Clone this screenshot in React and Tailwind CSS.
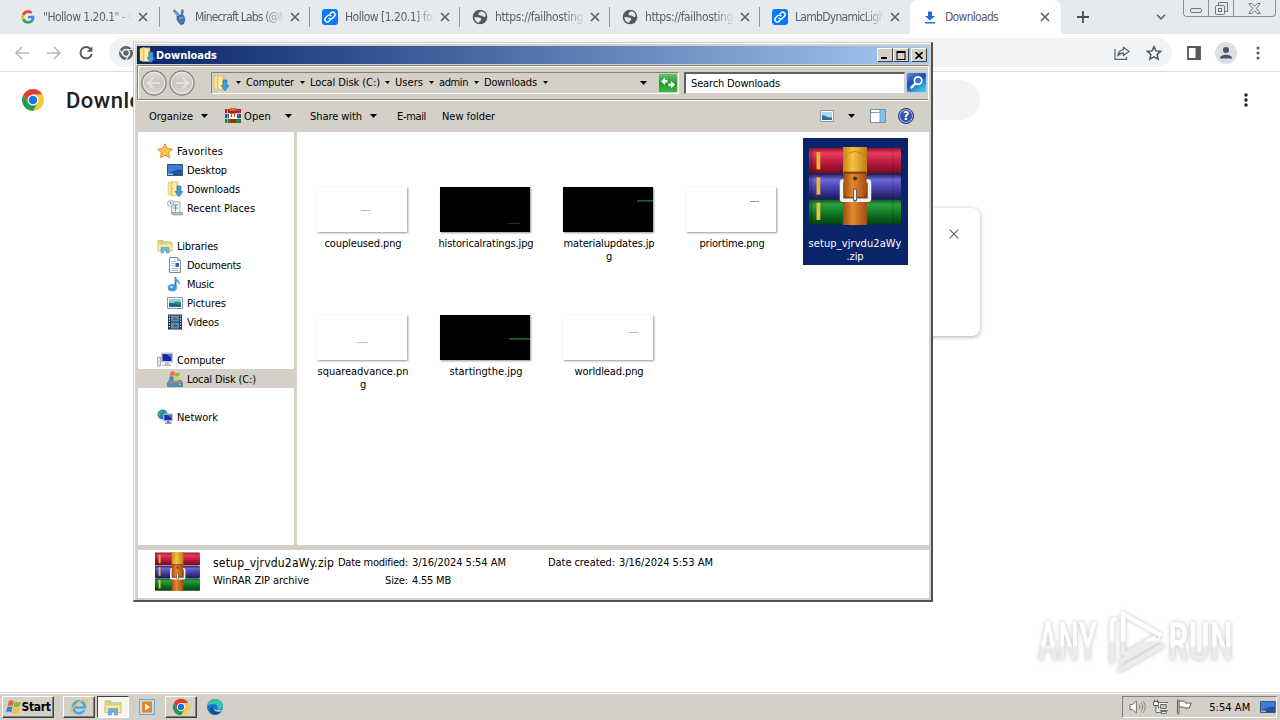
import React, { useLayoutEffect, useRef } from "react";

function Fit({ w, children, className = "pt-[2px]" }) {
  const ref = useRef(null);
  useLayoutEffect(() => {
    const el = ref.current;
    el.style.letterSpacing = "0px";
    const natural = el.getBoundingClientRect().width;
    el.style.letterSpacing = `${(w - natural) / String(children).length}px`;
  }, [w, children]);
  return (
    <span ref={ref} className={`inline-block whitespace-pre ${className}`}>
      {children}
    </span>
  );
}

function WinRar({ className }) {
  return (
    <svg viewBox="0 0 92 77" preserveAspectRatio="none" className={className}>
      <defs>
        <linearGradient id="rr" x1="0" y1="0" x2="0" y2="1">
          <stop offset="0" stopColor="#8f1030" />
          <stop offset=".2" stopColor="#e43c60" />
          <stop offset=".5" stopColor="#c41e42" />
          <stop offset="1" stopColor="#6e0a20" />
        </linearGradient>
        <linearGradient id="rb" x1="0" y1="0" x2="0" y2="1">
          <stop offset="0" stopColor="#2c2a78" />
          <stop offset=".2" stopColor="#6c68d8" />
          <stop offset=".5" stopColor="#4a44b4" />
          <stop offset="1" stopColor="#1e1a5c" />
        </linearGradient>
        <linearGradient id="rg" x1="0" y1="0" x2="0" y2="1">
          <stop offset="0" stopColor="#0a5c20" />
          <stop offset=".2" stopColor="#2ca040" />
          <stop offset=".5" stopColor="#118028" />
          <stop offset="1" stopColor="#044010" />
        </linearGradient>
        <linearGradient id="ry" x1="0" y1="0" x2="1" y2="0">
          <stop offset="0" stopColor="#c88414" />
          <stop offset=".4" stopColor="#f4c440" />
          <stop offset="1" stopColor="#c07c14" />
        </linearGradient>
        <linearGradient id="ro" x1="0" y1="0" x2="1" y2="0">
          <stop offset="0" stopColor="#a44c0c" />
          <stop offset=".4" stopColor="#e48830" />
          <stop offset="1" stopColor="#a04c10" />
        </linearGradient>
      </defs>
      <rect x="0" y="1" width="92" height="25.5" rx="2" fill="url(#rr)" />
      <rect x="0" y="27.5" width="92" height="24" rx="2" fill="url(#rb)" />
      <rect x="0" y="52" width="92" height="24.5" rx="2" fill="url(#rg)" />
      <path d="M84 2v24M84 28v23M84 53v23" stroke="#000" strokeOpacity=".18" />
      <path d="M2 2v24M2 28v23M2 53v23" stroke="#000" strokeOpacity=".22" strokeWidth="3" />
      <rect x="7.500" y="5" width="3.800" height="17" fill="#f2b52a" />
      <rect x="7.500" y="30" width="3.800" height="17" fill="#f2b52a" />
      <rect x="7.500" y="55" width="3.800" height="17" fill="#e8c63a" />
      <rect x="34" y="0" width="24" height="27" fill="url(#ry)" />
      <path d="M35 15c1-14 21-14 22 0" fill="none" stroke="#c48a1c" />
      <rect x="34" y="53" width="24" height="24" fill="url(#ro)" />
      <rect x="32.500" y="33.500" width="28" height="19" rx="1.500" fill="#8a4410" stroke="#f2f2f4" strokeWidth="3.500" />
      <path d="M34.500 24h23v21.500l-3 3.500h-17l-3-3.500z" fill="url(#ro)" />
      <path d="M34.500 25.500h23" stroke="#7a3806" strokeWidth="1.500" />
      <circle cx="46" cy="31" r="2" fill="#5a2806" />
      <path d="M46 43v9" stroke="#555" strokeWidth="4" strokeLinecap="round" />
      <path d="M46 43v8.500" stroke="#f0f0f0" strokeWidth="2.200" strokeLinecap="round" />
    </svg>
  );
}

function WinRarSmall({ className }) {
  return (
    <svg viewBox="0 0 16 16" className={className} shapeRendering="crispEdges">
      <path fill="#b8202c" d="M0 1h16v4H0z" />
      <path fill="#3444a8" d="M0 6h16v4H0z" />
      <path fill="#1c8434" d="M0 11h16v4H0z" />
      <path fill="#d4a428" d="M2 1h1v4H2zM2 6h1v4H2zM2 11h1v4H2z" />
      <path fill="#d86c20" d="M5 0h6v15H5z" />
      <path fill="#a02810" d="M5 3h6v2H5zM5 11h6v4H5z" />
      <path fill="#fff" d="M4 6h8v5H4z" />
      <path fill="#a4561c" d="M6 6h1v3H6zM9 6h1v3H9z" />
      <path fill="#88a8e8" d="M13 2h1v1h-1zM13 7h1v1h-1z" />
      <path fill="#60c060" d="M13 12h1v1h-1z" />
    </svg>
  );
}

function DownloadFolder({ className }) {
  return (
    <svg viewBox="0 0 16 16" className={className}>
      <path d="M1 1.500 5 .5v14l-4-1z" fill="#f8e48c" stroke="#e0bc58" strokeWidth=".5" />
      <path d="M4.500.8h6.500v13.700H4.500z" fill="#f2d46c" stroke="#d8b04c" strokeWidth=".5" />
      <path d="M5.500 1.500h3.500v12.500H5.500z" fill="#fbeeb0" />
      <path d="M10 5h4v5.500h2L12 15.800 8 10.500h2z" fill="#3a9ce0" stroke="#1c74bc" strokeWidth=".6" />
    </svg>
  );
}

function LibFolder({ className }) {
  return (
    <svg viewBox="0 0 16 16" className={className}>
      <path d="M1 2.500h5l1 1.500h8v9H1z" fill="#f4d873" stroke="#d0a440" strokeWidth=".6" />
      <path d="M3 3.500h9v3H3z" fill="#b4dca0" />
      <path d="M1 6h14v7H1z" fill="#f9e8a4" stroke="#d8b458" strokeWidth=".5" />
      <path d="M4 15V9.500h8V15h-2.500v-3h-3v3z" fill="#68b4e4" stroke="#3a88c0" strokeWidth=".5" />
    </svg>
  );
}

function Screen({ className }) {
  return (
    <svg viewBox="0 0 16 16" className={className}>
      <path d="M.5 2.500h15v11H.5z" fill="#24509c" stroke="#34507c" />
      <path d="M1 3h14v5C10 7 5 9 1 12z" fill="#3f7cd8" />
      <path d="M1 11.500h5v1.500H1z" fill="#8cc4f0" />
    </svg>
  );
}

const navIcons = {
  star: (
    <path d="m8 .8 2.200 4.700 5.200.6-3.800 3.500 1 5.200L8 12.200l-4.600 2.600 1-5.200L.6 6.100l5.200-.6z" fill="#ffc44c" stroke="#dc8420" strokeWidth=".9" />
  ),
  recent: (
    <>
      <path d="M4 2h9v10l2 2H5z" fill="#eef3f5" stroke="#8a98a4" strokeWidth=".8" />
      <path d="M6 5h5M6 8h5M8.500 5v6" stroke="#5c9ac0" />
      <path d="M4 12.500h11.500V15H6z" fill="#b4bec4" stroke="#808c94" strokeWidth=".6" />
      <circle cx="3.500" cy="3.500" r="3" fill="#eef6fb" stroke="#8c9cac" strokeWidth=".8" />
      <path d="M3.500 1.800v2h1.500" fill="none" stroke="#567" strokeWidth=".7" />
    </>
  ),
  doc: (
    <>
      <path d="M2.500.5h8l3 3v12h-11z" fill="#fff" stroke="#808a94" />
      <path d="M10.500.5v3h3" fill="#d4dce2" stroke="#808a94" strokeWidth=".8" />
      <path d="M4.500 4.500h5M4.500 6.500h3M4.500 8.500h3M4.500 11.500h7M4.500 13.500h7" stroke="#8cacc8" strokeWidth=".8" />
      <path d="M8.500 6h3.500v4H8.500z" fill="#2c64ac" />
    </>
  ),
  music: (
    <>
      <path d="M8.500 1v10.500" stroke="#2c78c8" strokeWidth="1.800" />
      <path d="M8 .5c.5 3.500 6.500 3.500 4.500 8.500C12 6 9.500 6 8 5z" fill="#48a4e4" />
      <ellipse cx="5.300" cy="11.800" rx="4.200" ry="3.300" fill="#3c9ce4" stroke="#2474b8" strokeWidth=".5" />
      <ellipse cx="4.400" cy="10.900" rx="1.800" ry="1" fill="#b0dcf8" />
    </>
  ),
  picture: (
    <>
      <path d="M.5 2.500h15v11H.5z" fill="#fff" stroke="#8498a8" />
      <path d="M2 4h12v8H2z" fill="#8ccce8" />
      <path d="M2 8c4-1 6 2 12 0v4H2z" fill="#236488" />
      <path d="M6 8c2-2 5-1.500 8-.5v2c-3 0-5 0-8-1.500z" fill="#2c8c70" />
    </>
  ),
  video: (
    <>
      <path d="M1 .5h14v15H1z" fill="#243040" />
      <path d="M4 1.500h8v6H4zM4 8.500h8v6H4z" fill="#4c94cc" />
      <path d="M6 5l2-2 2.500 2v1H6zM6 12l2-2 2.500 2v1H6z" fill="#884c44" />
      <path d="M2.500 1.500v13M13.500 1.500v13" stroke="#e8eef4" strokeWidth="1.200" strokeDasharray="1.300 1.300" />
    </>
  ),
  computer: (
    <>
      <path d="M.5 5h3v9h-3z" fill="#dce0e4" stroke="#8c949c" strokeWidth=".7" />
      <path d="M4.500 1h11v9h-11z" fill="#d8dce4" stroke="#a0a8b4" strokeWidth=".7" />
      <path d="M5.500 2h9v7h-9z" fill="#1424a8" />
      <path d="M9 2h5.500v4z" fill="#4870e4" />
      <path d="M8 10.500h4v2H8zM5 12.500h9V14H5z" fill="#b4bcc8" />
    </>
  ),
  disk: (
    <>
      <path d="M2 9.500h12l2 2.500v3.500H.5V12z" fill="#7c94a4" stroke="#4c6474" strokeWidth=".6" />
      <path d="M1 12.500h14.500v2.500H1z" fill="#3c98b4" />
      <path d="M12 13h2v1h-2z" fill="#6cf080" />
      <path d="M3.500 1c2-1 3.500 0 4.500.3L7.200 5c-1.500-.8-3-.6-4.400.2z" fill="#f06c30" />
      <path d="M8.500 1.500c1.500.7 3 .6 4.200 0L12 5.200c-1.500.7-3 .5-4.200 0z" fill="#8cc044" />
      <path d="M2.600 5.800c1.500-.7 3-.6 4.400 0l-.8 3.700C5 9 3.400 9 2 9.600z" fill="#3c8ce0" />
      <path d="M7.600 6c1.400.6 2.800.6 4.200 0L11 9.700c-1.400.5-2.800.5-4.200 0z" fill="#f8c43c" />
    </>
  ),
  network: (
    <>
      <circle cx="5.500" cy="5.500" r="5" fill="#2480c8" />
      <path d="M2 3c1-2 3-2 3-.5S3 4 3.500 6 2.500 8 2 7.500.5 5 2 3zM8 1c2 1 2.500 3 2.500 4C8 5 7 3.500 8 1z" fill="#44b454" />
      <path d="M6.500 5h9v7h-9z" fill="#d8dce4" stroke="#9ca4b0" strokeWidth=".6" />
      <path d="M7.300 5.800h7.400v5.400H7.300z" fill="#1a2cb4" />
      <path d="M10 5.800h4.700V9z" fill="#4c74e8" />
      <path d="M10 12h2.500v1.500H10zM8 13.500h6.500v1.200H8z" fill="#6c7c94" />
    </>
  ),
};

function NavIcon({ name }) {
  if (name === "desktop") return <Screen className="h-4 w-4 shrink-0" />;
  if (name === "download") return <DownloadFolder className="h-4 w-4 shrink-0" />;
  if (name === "library") return <LibFolder className="h-4 w-4 shrink-0" />;
  return (
    <svg viewBox="0 0 16 16" className="h-4 w-4 shrink-0">
      {navIcons[name]}
    </svg>
  );
}

function Chrome({ className }) {
  return (
    <svg viewBox="0 0 48 48" className={className}>
      <path d="M24 13h19.050A22 22 0 0 1 24 46l9.500-16.500z" fill="#fcc934" />
      <path d="M14.500 29.500 4.950 13A22 22 0 0 0 24 46l9.500-16.500z" fill="#1e9e4a" />
      <path d="M24 13H43.050A22 22 0 0 0 4.950 13l9.550 16.500z" fill="#e33b2e" />
      <circle cx="24" cy="24" r="11" fill="#fff" />
      <circle cx="24" cy="24" r="8.500" fill="#1a73e8" />
    </svg>
  );
}

function XMark({ className = "" }) {
  return (
    <svg viewBox="0 0 10 10" className={`h-[10px] w-[10px] shrink-0 ${className}`}>
      <path d="m1 1 8 8M9 1 1 9" stroke="currentColor" strokeWidth="1.700" />
    </svg>
  );
}

const favicons = {
  google: (
    <svg viewBox="0 0 48 48" className="h-[14px] w-[14px]">
      <path fill="#4285f4" d="M46 24.500c0-1.600-.1-3.100-.4-4.500H24v8.500h12.400c-.5 2.900-2.200 5.300-4.600 6.900v5.800h7.500C43.600 37.200 46 31.400 46 24.500z" />
      <path fill="#34a853" d="M24 47c6.200 0 11.400-2.100 15.300-5.600l-7.500-5.800c-2.100 1.400-4.700 2.200-7.800 2.200-6 0-11-4-12.800-9.500H3.500v6C7.300 41.900 15 47 24 47z" />
      <path fill="#fbbc04" d="M11.200 28.300a13.800 13.800 0 0 1 0-8.700v-6H3.500a23 23 0 0 0 0 20.700z" />
      <path fill="#ea4335" d="M24 10.100c3.400 0 6.400 1.200 8.800 3.400l6.600-6.600C35.400 3.300 30.200 1 24 1 15 1 7.300 6.100 3.500 13.600l7.700 6C13 14.100 18 10.100 24 10.100z" />
    </svg>
  ),
  hand: (
    <svg viewBox="0 0 16 16" className="h-4 w-4">
      <path d="M2.500 2 8 8M10.500 1.500 9.500 8" stroke="#4a80b8" strokeWidth="2.600" strokeLinecap="round" />
      <path d="M5 7 11.500 6.500l1.500 4-1.500 4.500-3 .5L5 11z" fill="#4478b0" stroke="#2c5480" strokeWidth=".7" />
      <path d="m2.800 2.800 4 4.200M7 9.500l4-1" stroke="#a0c8ec" strokeWidth=".9" />
    </svg>
  ),
  link: (
    <svg viewBox="0 0 16 16" className="h-4 w-4">
      <rect width="16" height="16" rx="3" fill="#0a78ff" />
      <g fill="none" stroke="#fff" strokeWidth="1.400" strokeLinecap="round">
        <path d="M7 9.300a2.400 2.400 0 0 0 3.400 0l2-2A2.400 2.400 0 0 0 9 3.900l-1.100 1" />
        <path d="M9 6.800a2.400 2.400 0 0 0-3.400 0l-2 2A2.400 2.400 0 0 0 7 12.200l1.100-1" />
      </g>
    </svg>
  ),
  globe: (
    <svg viewBox="0 0 16 16" className="h-4 w-4">
      <circle cx="8" cy="8" r="7.300" fill="#55595e" />
      <path d="M9 2.200C8 3.500 6.500 3.500 6.500 5s1.500 1.500 3 1.500S11 8 12 8s1.500-.5 1.700-1.500C13.200 4 11.500 2.500 9 2.200zM2.500 8c1.500 0 3 .5 4.500.5S9.500 9.500 9 11s-2 1-2 2.700C4.500 13.500 2.500 11 2.500 8z" fill="#e8eaed" />
    </svg>
  ),
  download: (
    <svg viewBox="0 0 16 16" className="h-4 w-4">
      <path d="M6 2.500h4V7h3l-5 4.500L3 7h3zM3 13h10v1.600H3z" fill="#1a6ae0" />
    </svg>
  ),
};

const tabs = [
  { icon: "google", text: "\"Hollow 1.20.1\" - G", w: 93, cls: "w-[152px] pl-[12px]" },
  { icon: "hand", text: "Minecraft Labs (@M", w: 92, cls: "w-[150px] pl-3" },
  { icon: "link", text: "Hollow [1.20.1] for", w: 91, cls: "w-[150px] pl-3" },
  { icon: "globe", text: "https://failhosting.", w: 91, cls: "w-[150px] pl-3" },
  { icon: "globe", text: "https://failhosting.", w: 91, cls: "w-[150px] pl-3" },
  { icon: "link", text: "LambDynamicLights", w: 98, cls: "w-[150px] pl-3", last: true },
];

function TabBody({ icon, text, w }) {
  return (
    <>
      <span className="flex w-4 shrink-0 justify-center">{favicons[icon]}</span>
      <span className="ml-[7px] w-[90px] overflow-hidden text-[12px] leading-4 text-[#5c6064] [mask-image:linear-gradient(to_right,#000_76%,transparent)]">
        <Fit w={w} className="">{text}</Fit>
      </span>
      <XMark className="ml-[5px] text-[#5f6368]" />
    </>
  );
}

function Browser() {
  return (
    <div className="flex h-[692px] flex-col overflow-hidden bg-white">
      <div className="flex h-[34px] shrink-0 bg-[#e7eaed] pl-[8px]">
        {tabs.map((t, i) => (
          <div key={i} className={`flex h-[34px] shrink-0 items-center ${t.cls}`}>
            <TabBody {...t} />
            {!t.last && <span className="ml-auto h-5 w-px bg-[#909498]" />}
          </div>
        ))}
        <div className="flex h-[34px] w-[151px] shrink-0 items-center rounded-t-lg bg-white pl-3">
          <span className="w-4 shrink-0">{favicons.download}</span>
          <span className="ml-[7px] w-[90px] text-[12px] leading-4 text-[#5c6064]">
            <Fit w={53} className="">Downloads</Fit>
          </span>
          <XMark className="ml-[5px] text-[#5f6368]" />
        </div>
        <svg viewBox="0 0 12 12" className="mt-[11px] ml-[16px] h-3 w-3 shrink-0">
          <path d="M6 0v12M0 6h12" stroke="#4a4e52" strokeWidth="1.800" />
        </svg>
        <svg viewBox="0 0 10 6" className="mt-[14px] ml-[67px] h-[6px] w-[10px] shrink-0">
          <path d="m1 .8 4 4 4-4" fill="none" stroke="#5f6368" strokeWidth="1.600" />
        </svg>
        <div className="ml-[17px] flex h-[17px] w-[93px] shrink-0 rounded-b border border-t-0 border-[#8b8f95] text-[#70757c]">
          <div className="flex w-[25px] items-center justify-center border-r border-[#8b8f95] pt-1">
            <svg viewBox="0 0 12 5" className="h-[5px] w-3">
              <rect x=".5" y=".5" width="11" height="4" rx="1.500" fill="none" stroke="currentColor" />
            </svg>
          </div>
          <div className="flex w-[25px] items-center justify-center border-r border-[#8b8f95]">
            <svg viewBox="0 0 13 13" className="h-[13px] w-[13px]" fill="none" stroke="currentColor">
              <path d="M3.500 3.500v-3h9v9h-3" />
              <rect x=".5" y="3.500" width="9" height="9" rx="1" />
              <rect x="3.500" y="6.500" width="3" height="3" />
            </svg>
          </div>
          <div className="flex flex-1 items-center justify-center">
            <svg viewBox="0 0 13 11" className="h-[11px] w-[13px]" fill="none" stroke="currentColor">
              <path d="M.8.5h3l2.700 2.800L9.200.5h3L8.500 5.500l3.700 5h-3L6.500 7.700l-2.700 2.800h-3l3.700-5z" />
            </svg>
          </div>
        </div>
      </div>

      <div className="flex h-[38px] shrink-0 items-center border-b border-[#d9dbde] bg-white pl-[14px]">
        {[0, 1].map((i) => (
          <svg key={i} viewBox="0 0 16 14" className={i ? "ml-4 h-[14px] w-4 rotate-180" : "h-[14px] w-4"}>
            <path d="M15 7h-13M8 1 2 7l6 6" fill="none" stroke="#b6b8ba" strokeWidth="1.600" />
          </svg>
        ))}
        <svg viewBox="0 0 16 16" className="ml-4 h-4 w-4">
          <path d="M12.500 4A5.700 5.700 0 1 0 13.700 9" fill="none" stroke="#54585c" strokeWidth="1.900" />
          <path d="M14.300 1.200v5.600H8.700z" fill="#54585c" />
        </svg>
        <div className="ml-[15px] flex h-[29px] w-[1063px] items-center rounded-full bg-[#f1f3f4] pr-[9px] pl-[9px]">
          <svg viewBox="0 0 16 16" className="h-4 w-4">
            <circle cx="8" cy="8" r="7" fill="#5f6368" />
            <circle cx="8" cy="8" r="3.500" fill="#5f6368" stroke="#f1f3f4" strokeWidth="1.500" />
            <path d="M8 4.500h6.500M5 9.800 1.500 4.500M11 9.800 8 15" stroke="#f1f3f4" strokeWidth="1.200" />
          </svg>
          <svg viewBox="0 0 16 14" className="ml-auto h-[14px] w-4" fill="none" stroke="#5f6368" strokeWidth="1.300">
            <path d="M1 3v10.300h11.500V11" />
            <path d="M9.500 1.200 15 5.500 9.500 9.500V7C6.500 7 5 8 3.800 10 4.200 6.500 6 4 9.500 3.600z" strokeLinejoin="round" />
          </svg>
          <svg viewBox="0 0 24 24" className="ml-[15px] h-[18px] w-[18px]" fill="none" stroke="#54585c" strokeWidth="2">
            <path d="m12 3.500 2.600 5.700 6.200.7-4.600 4.200 1.300 6.100-5.500-3.100-5.500 3.100 1.300-6.100-4.600-4.200 6.200-.7z" />
          </svg>
        </div>
        <svg viewBox="0 0 14 14" className="ml-[15px] h-[14px] w-[14px]">
          <path d="M1 1h12v12H1z" fill="none" stroke="#54585c" strokeWidth="1.800" />
          <path d="M8.500 1H13v12H8.500z" fill="#54585c" />
        </svg>
        <svg viewBox="0 0 22 22" className="ml-[14px] h-[22px] w-[22px]">
          <circle cx="11" cy="11" r="11" fill="#dcdfe6" />
          <circle cx="11" cy="8" r="3" fill="#485468" />
          <path d="M5 16.500c0-5 12-5 12 0z" fill="#485468" />
        </svg>
        <svg viewBox="0 0 4 14" className="ml-[19px] h-[14px] w-1" fill="#54585c">
          <circle cx="2" cy="2" r="1.500" /><circle cx="2" cy="7" r="1.500" /><circle cx="2" cy="12" r="1.500" />
        </svg>
      </div>

      <div className="flex h-14 shrink-0 items-center pl-[21px]">
        <Chrome className="h-6 w-6" />
        <span className="ml-[21px] font-[Roboto,sans-serif] text-[22px] font-medium tracking-[0.5px] text-[#202124] [font-stretch:normal]">Downloads</span>
        <div className="ml-auto h-10 w-[680px] rounded-full bg-[#f1f3f4]" />
        <svg viewBox="0 0 4 14" className="mr-[32px] ml-[264px] h-[14px] w-1" fill="#202124">
          <circle cx="2" cy="2" r="1.700" /><circle cx="2" cy="7" r="1.700" /><circle cx="2" cy="12" r="1.700" />
        </svg>
      </div>
      <div className="mx-auto mt-20 flex h-[128px] w-[680px] justify-end rounded-lg bg-white pt-[21px] pr-[21px] shadow-[0_1px_4px_rgba(60,64,67,0.45)]">
        <svg viewBox="0 0 10 10" className="h-[10px] w-[10px]">
          <path d="m.7.7 8.600 8.600M9.300.7.7 9.300" stroke="#5f6368" strokeWidth="1.200" />
        </svg>
      </div>
    </div>
  );
}

function Caret({ className = "", small = false }) {
  return (
    <svg viewBox="0 0 7 4" className={`shrink-0 ${small ? "h-[3px] w-[5px]" : "h-1 w-[7px]"} ${className}`}>
      <path d="M0 0h7L3.500 4z" fill="#000" />
    </svg>
  );
}

const crumbs = [
  { t: "Computer", w: 48, c: "w-[54px]" },
  { t: "Local Disk (C:)", w: 70, c: "w-[75px]" },
  { t: "Users", w: 28, c: "w-[34px]" },
  { t: "admin", w: 29, c: "w-[35px]" },
  { t: "Downloads", w: 53, c: "w-[59px]" },
];

const nav = [
  { t: "Favorites", w: 46, i: "star" },
  { t: "Desktop", w: 40, i: "desktop", sub: true },
  { t: "Downloads", w: 53, i: "download", sub: true },
  { t: "Recent Places", w: 68, i: "recent", sub: true },
  null,
  { t: "Libraries", w: 41, i: "library" },
  { t: "Documents", w: 54, i: "doc", sub: true },
  { t: "Music", w: 27, i: "music", sub: true },
  { t: "Pictures", w: 39, i: "picture", sub: true },
  { t: "Videos", w: 32, i: "video", sub: true },
  null,
  { t: "Computer", w: 48, i: "computer" },
  { t: "Local Disk (C:)", w: 69, i: "disk", sub: true, sel: true },
  null,
  { t: "Network", w: 41, i: "network" },
];

const files = [
  { lines: [["coupleused.png", 77]], mark: "mt-[23px] ml-[44px] w-[10px] bg-[#bcbcbc]" },
  { lines: [["historicalratings.jpg", 95]], dark: true, mark: "mt-[36px] ml-[68px] w-[12px] bg-[#2c2c2c]" },
  { lines: [["materialupdates.jp", 91], ["g", 6]], dark: true, mark: "mt-[13px] ml-[74px] w-[16px] shadow-[0_1px_0_#123c30] bg-[#1c5848]" },
  { lines: [["priortime.png", 65]], mark: "mt-[14px] ml-[64px] w-[9px] bg-[#90969c]" },
  { zip: true, lines: [["setup_vjrvdu2aWy", 93], [".zip", 17]] },
  { lines: [["squareadvance.pn", 91], ["g", 6]], mark: "mt-[27px] ml-[40px] w-[11px] bg-[#a8d0cc]" },
  { lines: [["startingthe.jpg", 73]], dark: true, mark: "mt-[23px] ml-[69px] w-[21px] shadow-[0_1px_0_#14401c] bg-[#1f6634]" },
  { lines: [["worldlead.png", 69]], mark: "mt-[17px] ml-[66px] w-[9px] bg-[#b4b0cc]" },
];

function File({ f }) {
  return (
    <div className={`flex h-[127px] flex-col items-center ${f.zip ? "bg-[#0a246a] text-white" : ""}`}>
      {f.zip ? (
        <WinRar className="mt-[9px] ml-[6px] h-[78px] w-[92px] shrink-0 self-start" />
      ) : (
        <div className={`mt-[49px] ml-[6px] flex h-[45px] w-[90px] shrink-0 items-start self-start shadow-[1px_1px_2px_rgba(0,0,0,0.42)] ${f.dark ? "bg-black" : "bg-white"}`}>
          <span className={`block h-px ${f.mark}`} />
        </div>
      )}
      <div className={`mr-px flex flex-col items-center leading-[13px] ${f.zip ? "mt-[12px]" : "mt-[5px]"}`}>
        {f.lines.map(([t, w], i) => (
          <Fit key={i} w={w} className="">{t}</Fit>
        ))}
      </div>
    </div>
  );
}

function CaptionButton({ children, className = "" }) {
  return (
    <span className={`flex h-[14px] w-4 items-center justify-center border border-t-white border-r-[#404040] border-b-[#404040] border-l-white bg-[#d4d0c8] ${className}`}>
      {children}
    </span>
  );
}

function Explorer() {
  return (
    <div className="absolute top-[42px] left-[133px] flex h-[560px] w-[800px] flex-col border-t border-r-2 border-b-2 border-l border-t-[#d4d0c8] border-r-[#505050] border-b-[#505050] border-l-[#d4d0c8] bg-[#d4d0c8] text-[11px] text-black">
      <div className="flex min-h-0 flex-1 flex-col border-t border-l border-white pt-[2px] pr-[2px] pb-[2px] pl-[2px]">
        <div className="flex h-[18px] shrink-0 items-center bg-gradient-to-r from-[#0a246a] to-[#a6caf0] pr-[2px] pl-[2px]">
          <DownloadFolder className="h-4 w-4" />
          <span className="ml-[1px] font-bold text-white"><Fit w={61}>Downloads</Fit></span>
          <CaptionButton className="ml-auto">
            <svg viewBox="0 0 10 8" className="h-2 w-[10px]"><path d="M1 6h6v2H1z" /></svg>
          </CaptionButton>
          <CaptionButton>
            <svg viewBox="0 0 10 9" className="h-[9px] w-[10px]"><path d="M.5 0h9v9h-9zM1.500 2v6h7V2z" fillRule="evenodd" /></svg>
          </CaptionButton>
          <CaptionButton className="ml-[2px]">
            <svg viewBox="0 0 8 7" className="h-[7px] w-2"><path d="m.5 0 7 7M7.500 0l-7 7" stroke="#000" strokeWidth="1.600" /></svg>
          </CaptionButton>
        </div>

        <div className="mt-[1px] flex h-[35px] shrink-0 items-center border border-t-[#808080] border-r-white border-b-[#808080] border-l-[#808080] pl-[4px] shadow-[inset_1px_1px_0_#fff,0_1px_0_#fff]">
          {[0, 1].map((i) => (
            <svg key={i} viewBox="0 0 26 26" className={`h-[26px] w-[26px] shrink-0 ${i ? "ml-[2px]" : "-ml-px"}`}>
              <defs>
                <linearGradient id="navbtn" x1="0" y1="0" x2="0" y2="1">
                  <stop offset="0" stopColor="#e0deda" />
                  <stop offset=".5" stopColor="#c8c5c0" />
                  <stop offset="1" stopColor="#dcdad4" />
                </linearGradient>
              </defs>
              <circle cx="13" cy="13" r="12" fill="url(#navbtn)" stroke="#888682" strokeWidth="1.300" />
              <circle cx="13" cy="13" r="10.800" fill="none" stroke="#efeeec" />
              <path transform={i ? "rotate(180 13 13)" : ""} d="M19 13H7.500M12.500 7.500 7 13l5.500 5.500" fill="none" stroke="#e4e2de" strokeWidth="2" />
            </svg>
          ))}
          <div className="ml-[16px] flex h-[22px] w-[468px] items-center border border-t-[#808080] border-r-white border-b-white border-l-[#808080] pl-[1px]">
            <DownloadFolder className="h-4 w-4 shrink-0" />
            <Caret small className="ml-[7px]" />
            <div className="ml-[5px] flex items-center">
              {crumbs.map((c) => (
                <div key={c.t} className="flex items-center">
                  <span className={`shrink-0 ${c.c}`}><Fit w={c.w}>{c.t}</Fit></span>
                  <Caret small className="mr-[5px]" />
                </div>
              ))}
            </div>
            <Caret className="mr-[11px] ml-auto" />
            <svg viewBox="0 0 20 20" className="h-5 w-5 shrink-0">
              <defs>
                <linearGradient id="refresh" x1="0" y1="0" x2="0" y2="1">
                  <stop offset="0" stopColor="#70c470" />
                  <stop offset=".5" stopColor="#249834" />
                  <stop offset="1" stopColor="#3cbc44" />
                </linearGradient>
              </defs>
              <rect x=".5" y=".5" width="19" height="19" fill="url(#refresh)" stroke="#bcd8b4" />
              <path d="M3 8.500 7 4.500v2.500h2.500v2.500H7V12zM17 11.500 13 15.500V13h-2.500v-2.500H13V8z" fill="#fff" />
            </svg>
          </div>
          <div className="ml-[5px] flex h-[22px] w-[221px] shrink-0 items-center border-t-2 border-r border-b border-l-2 border-t-[#606060] border-r-[#d4d0c8] border-b-[#d4d0c8] border-l-[#606060] bg-white pl-[5px]">
            <Fit w={89}>Search Downloads</Fit>
          </div>
          <svg viewBox="0 0 20 20" className="ml-[1px] h-[21px] w-[21px] shrink-0">
            <defs>
              <linearGradient id="search" x1="0" y1="0" x2=".6" y2="1">
                <stop offset="0" stopColor="#6c90dc" />
                <stop offset=".5" stopColor="#1c48b4" />
                <stop offset="1" stopColor="#34c8e8" />
              </linearGradient>
            </defs>
            <rect x=".5" y=".5" width="19" height="19" rx="2" fill="url(#search)" stroke="#b8cce4" />
            <circle cx="11.500" cy="8.200" r="3.600" fill="#3c74d4" stroke="#fff" strokeWidth="1.600" />
            <path d="M8.800 11 4.500 15.300" stroke="#fff" strokeWidth="2.300" />
          </svg>
        </div>

        <div className="flex h-[32px] shrink-0 items-center pl-[12px]">
          <Fit w={44}>Organize</Fit>
          <Caret className="ml-[8px]" />
          <WinRarSmall className="ml-[17px] h-4 w-4" />
          <span className="ml-[3px] w-[41px]"><Fit w={27}>Open</Fit></span>
          <Caret />
          <span className="ml-[18px] w-[60px]"><Fit w={52}>Share with</Fit></span>
          <Caret />
          <span className="ml-[20px] w-[45px]"><Fit w={29}>E-mail</Fit></span>
          <Fit w={53}>New folder</Fit>
          <svg viewBox="0 0 14 12" className="ml-[325px] h-3 w-[14px]">
            <path d="M.5.5h13v11H.5z" fill="#fff" stroke="#8c98a8" />
            <path d="M2 2h10v8H2z" fill="#a4d8ec" />
            <path d="M2 5.500c4 0 5 2.500 10 2V10H2z" fill="#2c6c94" />
          </svg>
          <Caret className="ml-[14px]" />
          <svg viewBox="0 0 16 14" className="ml-[15px] h-[14px] w-4">
            <path d="M.5.5h15v13H.5z" fill="#fff" stroke="#7890a8" />
            <path d="M10 1h5v12h-5z" fill="#7cc4e4" />
            <path d="M10 1v12M1 3.500h9" stroke="#88a0b8" />
          </svg>
          <span className="ml-[12px] flex h-4 w-4 items-center justify-center rounded-full border border-[#22398c] bg-[#3454b0] text-[12px] leading-none font-bold text-white ring-1 ring-[#b8c0d4] ring-inset">?</span>
        </div>

        <div className="flex h-[413px] shrink-0 pl-[1px]">
          <div className="w-[156px] shrink-0 bg-white pt-[9px]">
            {nav.map((n, i) =>
              n ? (
                <div key={i} className={`flex h-[19px] items-center ${n.sub ? "pl-[29px]" : "pl-[19px]"} ${n.sel ? "bg-[#d4d0c8]" : ""}`}>
                  <NavIcon name={n.i} />
                  <span className="ml-1 leading-[13px]"><Fit w={n.w}>{n.t}</Fit></span>
                </div>
              ) : (
                <div key={i} className="h-[19px]" />
              )
            )}
          </div>
          <div className="ml-[3px] flex-1 bg-white pt-[6px] pl-[14px]">
            <div className="grid grid-cols-[repeat(5,105px)] gap-x-[18px] gap-y-px">
              {files.map((f, i) => (
                <File key={i} f={f} />
              ))}
            </div>
          </div>
        </div>

        <div className="mt-[5px] ml-[1px] flex min-h-0 flex-1 bg-white">
          <WinRar className="mt-[2px] ml-[17px] h-[39px] w-[45px] shrink-0" />
          <div className="ml-[13px] flex flex-col pt-[4px] leading-[18px]">
            <div className="flex">
              <span className="w-[125px] text-[12px]"><Fit w={121} className="">setup_vjrvdu2aWy.zip</Fit></span>
              <span className="w-[74px]"><Fit w={70} className="">Date modified:</Fit></span>
              <span className="w-[136px]"><Fit w={94} className="">3/16/2024 5:54 AM</Fit></span>
              <span className="w-[71px]"><Fit w={67} className="">Date created:</Fit></span>
              <Fit w={94} className="">3/16/2024 5:53 AM</Fit>
            </div>
            <div className="flex">
              <span className="w-[172px]"><Fit w={96} className="">WinRAR ZIP archive</Fit></span>
              <span className="w-[27px]"><Fit w={23} className="">Size:</Fit></span>
              <Fit w={39} className="">4.55 MB</Fit>
            </div>
          </div>
        </div>
      </div>
    </div>
  );
}

function Watermark() {
  return (
    <svg viewBox="0 0 200 70" className="absolute top-[606px] left-[1034px] h-[70px] w-[200px] drop-shadow-[0_0_2px_rgba(0,0,0,0.25)]">
      <defs>
        <linearGradient id="wm" gradientUnits="userSpaceOnUse" x1="0" y1="0" x2="0" y2="70">
          <stop offset="0.48" stopColor="#ffffff" />
          <stop offset="0.52" stopColor="#ececec" />
        </linearGradient>
        <linearGradient id="wmText" x1="0" y1="0" x2="0" y2="1">
          <stop offset="0.55" stopColor="#ffffff" />
          <stop offset="0.6" stopColor="#ececec" />
        </linearGradient>
      </defs>
      <g fill="url(#wmText)" fontFamily="Roboto, sans-serif" fontSize="53" fontWeight="500">
        <text x="4" y="54" textLength="59" lengthAdjust="spacingAndGlyphs">ANY</text>
        <text x="134" y="54" textLength="65" lengthAdjust="spacingAndGlyphs">RUN</text>
      </g>
      <g fill="none" stroke="url(#wm)" strokeWidth="4.500" strokeLinejoin="round">
        <path d="M89 49V8l38 21.500" />
        <path d="M89 49l33-18M85 56l41-23" />
        <path d="M82 12l-4 3v42" />
        <path d="M86 64l42-24" strokeLinecap="round" />
      </g>
    </svg>
  );
}

function TaskButton({ children, pressed, flat, className = "" }) {
  const look = flat
    ? "border-transparent"
    : pressed
      ? "border-t-[#404040] border-l-[#404040] border-r-white border-b-white bg-[#f6f5f2]"
      : "border-t-white border-l-white border-r-[#404040] border-b-[#404040] shadow-[inset_-1px_-1px_0_#808080]";
  return <div className={`flex h-[22px] items-center justify-center border ${look} ${className}`}>{children}</div>;
}

function Taskbar() {
  return (
    <div className="flex h-7 border-t border-[#d4d0c8] bg-[#d4d0c8] text-[11px] shadow-[inset_0_1px_0_#fff]">
      <div className="flex w-full items-start pt-[3px] pl-[2px]">
        <TaskButton className="w-[52px]">
          <svg viewBox="0 0 16 16" className="h-4 w-4">
            <path d="M2.800 2c2-1.200 3.800-.7 5 .1L6.700 7.200c-1.500-.8-3.200-1-5.200 0z" fill="#f0642c" />
            <path d="M8.600 2.600c1.700.9 4 .9 6.200-.2L13.600 7.600c-2 1-4.200.9-6 .1z" fill="#7cbc3c" />
            <path d="M1.300 8.200c2-1 3.700-.8 5.200 0l-1.200 5c-1.600-.9-3.200-.9-5.200 0z" fill="#2c80dc" />
            <path d="M7.400 8.700c1.700.8 4 .9 6 0l-1.200 5.100c-2 1-4.200.9-6 0z" fill="#f8bc2c" />
          </svg>
          <span className="text-[12px] font-bold"><Fit w={29} className="">Start</Fit></span>
        </TaskButton>
        <TaskButton className="ml-[9px] w-8">
          <svg viewBox="0 0 18 18" className="h-[18px] w-[18px]" fill="none">
            <path d="M14.300 12A6 6 0 1 1 15 9.500H4.500" stroke="#48a8e4" strokeWidth="2.600" />
            <path d="M2.500 16C-1 13 7 2.500 15.500 1.500c2 0 1.500 2 .8 3" stroke="#f0c040" strokeWidth="1.500" />
          </svg>
        </TaskButton>
        <TaskButton pressed className="ml-[2px] w-8"><LibFolder className="h-[18px] w-[18px]" /></TaskButton>
        <TaskButton flat className="ml-[2px] w-8">
          <svg viewBox="0 0 16 16" className="h-4 w-4">
            <path d="M.5.5h15v15H.5z" fill="#bce0f4" stroke="#6ca8cc" />
            <path d="M3 2.500h10v11H3z" fill="#f08420" />
            <path d="M6 4.500v7L11 8z" fill="#fff" />
          </svg>
        </TaskButton>
        <TaskButton className="ml-[2px] w-8"><Chrome className="h-[18px] w-[18px]" /></TaskButton>
        <TaskButton flat className="ml-[2px] w-8">
          <svg viewBox="0 0 18 18" className="h-[18px] w-[18px]">
            <circle cx="9" cy="9" r="8" fill="#1478cc" />
            <path d="M1 8.500C2-1.500 17-1 17 8c0 3-3.500 4-6 3 1-1 1-5-3-5C4 6 2 7 1 8.500z" fill="#38c4b0" />
            <path d="M7.500 8.500C6 12 10 15.500 15 13c-2 4-9 5.500-11 0-1-3 1.500-5 3.500-4.500z" fill="#104c9c" />
            <path d="M8 8.500c-1 2.500 2 5 8 3l-.5 1.500c-5 2-9-1-7.500-4.500z" fill="#d4d0c8" />
          </svg>
        </TaskButton>
        <div className="mr-[3px] ml-auto flex h-[22px] w-[155px] items-center border border-t-[#808080] border-r-white border-b-white border-l-[#808080] pl-[6px]">
          <svg viewBox="0 0 17 14" className="h-[14px] w-[17px]" fill="none" stroke="#808080">
            <path d="M1 4.500h2.500L7.500 1v12l-4-3.500H1z" fill="#fff" stroke="#707070" />
            <path d="M10 4.500c1.300 1.500 1.300 3.500 0 5M12 2.500c2.500 2.500 2.500 6.500 0 9M14 1c3.300 3.500 3.300 8.500 0 12" />
          </svg>
          <svg viewBox="0 0 16 16" className="ml-[7px] h-4 w-4" fill="#fff" stroke="#606060">
            <path d="M5.500 3.500h10v8h-10z" />
            <path d="M7.500 5.500h6v4h-6z" fill="#c4c4c4" />
            <path d="M1.500.5v3M4.500.5v3M.5 2.500h5v4h-5zM3 6.500v7h5M8.500 12.500h5v2h-5z" />
          </svg>
          <svg viewBox="0 0 16 16" className="ml-[8px] h-4 w-4" fill="#fff" stroke="#606060">
            <path d="M3 2h5.500l1.500 2h5.500l-2 5H9L7.500 8H3z" />
            <path d="M1.500 1h1.500v14H1.500z" />
          </svg>
          <span className="ml-[17px]"><Fit w={41}>5:54 AM</Fit></span>
          <Screen className="ml-[10px] h-4 w-4" />
        </div>
      </div>
    </div>
  );
}

export default function App() {
  return (
    <div className="relative h-[720px] w-[1280px] overflow-hidden bg-white font-['DejaVu_Sans_Condensed','DejaVu_Sans',sans-serif] [font-stretch:condensed]">
      <Browser />
      <Taskbar />
      <Explorer />
      <Watermark />
    </div>
  );
}
